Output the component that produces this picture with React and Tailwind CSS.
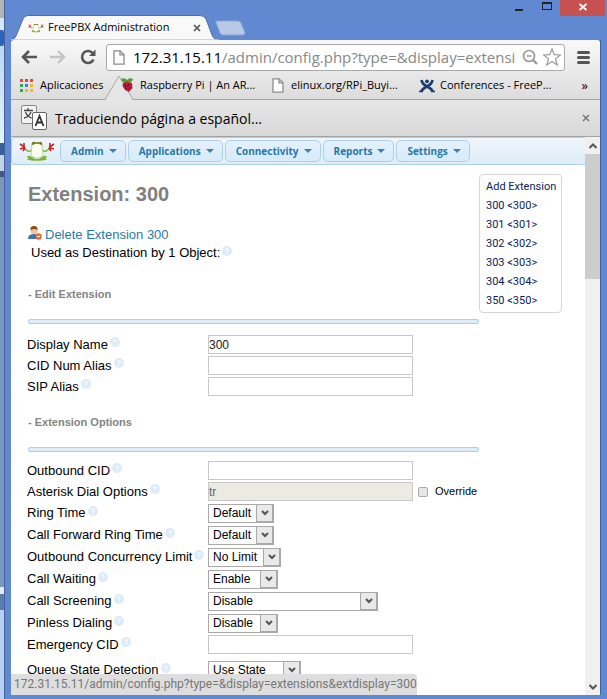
import React from "react";

const chromeFont = "font-['Open_Sans','Noto_Sans',sans-serif]";

function FrogLogo({ className }) {
  return (
    <svg viewBox="0 0 36 20" className={className} aria-hidden="true">
      <path d="M5 6Q8 12.500 14 9M31 6Q28 12.500 22 9" stroke="#86b83a" strokeWidth="1.600" fill="none" />
      <path d="M1 3l5 3.500M5 2v5M1 8l5-1.500M4 10l2-3M35 3l-5 3.500M31 2v5M35 8l-5-1.500M32 10l-2-3" stroke="#c8232c" strokeWidth="1.600" />
      <path d="M8 16Q9 13.500 13 16L16 18H20L23 16Q27 13.500 28 16L26.500 17 28 18.500Q23 20 18 19.800 13 20 8 18.500L9.500 17Z" fill="#7fb030" />
      <path d="M13 4Q14 2 16 2h4q2 0 3 2L24 12.500Q23 17 18 17T12 12.500Z" fill="#fbfdf5" stroke="#a9ce78" strokeWidth=".8" />
      <path d="M12.500 4.500Q12.500 0 16 1H20Q23.500 0 23.500 4.500L20 3H16Z" fill="#7d9a34" />
      <circle cx="14.500" cy="2.200" r="1" fill="#a33a2a" />
      <circle cx="21.500" cy="2.200" r="1" fill="#a33a2a" />
    </svg>
  );
}

function PageIcon() {
  return (
    <svg viewBox="0 0 12 15" className="h-[15px] w-3 shrink-0" aria-hidden="true">
      <path d="M1 .8h6l4 4v9.400H1z" fill="#fff" stroke="#8c8c8c" strokeWidth="1.300" />
      <path d="M7 .8v4h4" fill="none" stroke="#8c8c8c" strokeWidth="1.300" />
    </svg>
  );
}

function Help() {
  return (
    <svg viewBox="0 0 10 10" className="mb-[5px] ml-[2px] size-[10px] shrink-0" aria-hidden="true">
      <circle cx="5" cy="5" r="4.900" fill="#dcebf7" />
      <path d="M3.600 3.900Q3.700 2.800 5 2.800T6.400 4Q6.400 4.700 5.500 5 5 5.300 5 6M5 6.900v1" fill="none" stroke="#fff" strokeWidth="1" />
    </svg>
  );
}

function Row({ id, label, tall, children, className = "" }) {
  return (
    <div className={`flex items-center ${tall ? "h-[22px]" : "h-[21px]"} ${className}`}>
      <div className="flex w-[181px] shrink-0 items-center whitespace-nowrap">
        <label htmlFor={id}>{label}</label>
        <Help />
      </div>
      {children}
    </div>
  );
}

function Field({ id, ...props }) {
  return (
    <input
      id={id}
      type="text"
      className="h-[19px] w-[205px] border border-[#c8c8c8] bg-white text-[12px] text-[#222] disabled:bg-[#ebebe4] disabled:text-[#666]"
      {...props}
    />
  );
}

function Select({ id, value, width }) {
  return (
    <div className={`relative h-[19px] ${width}`}>
      <select
        id={id}
        defaultValue={value}
        className="block h-full w-full appearance-none border border-[#a9a9a9] bg-white pl-1 text-[12px] leading-[17px] text-black"
      >
        <option>{value}</option>
      </select>
      <span className="pointer-events-none absolute inset-y-0 right-0 flex w-[18px] items-center justify-center border-t border-r-2 border-b-2 border-l border-[#a9a9a9] bg-[#e9e9e9]">
        <svg viewBox="0 0 8 6" className="mt-px h-[6px] w-2" aria-hidden="true">
          <path d="M1 1l3 3 3-3" fill="none" stroke="#555" strokeWidth="2" />
        </svg>
      </span>
    </div>
  );
}

function Section({ title, children, className = "" }) {
  return (
    <section className={className}>
      <h2 className="ml-px text-[11px] leading-4 font-bold text-[#848484]">- {title}</h2>
      <div className="mt-[17px] mb-2 ml-px h-[5px] rounded-[2px] border border-[#aed0ea] bg-[#deedf7]" />
      {children}
    </section>
  );
}

function TitleBar() {
  return (
    <header className="relative flex h-10 shrink-0 items-end">
      <div className="relative flex h-[25px] w-[208px] items-center pl-[17px]">
        <svg viewBox="0 0 208 25" className="absolute inset-0 size-full" aria-hidden="true">
          <path d="M0 25Q4 24 5 21L12 4Q13 .5 17 .5H189Q193 .5 195 4L201 20Q203 25 208 25Z" fill="#f9f9f9" stroke="#4a6da8" />
          <rect y="24.500" width="208" height="1" fill="#f9f9f9" />
        </svg>
        <FrogLogo className="relative h-[10px] w-4" />
        <span className="relative ml-[4px] text-[11px] whitespace-nowrap">FreePBX Administration</span>
        <button type="button" aria-label="Close tab" className="absolute right-4 flex size-3 items-center justify-center">
          <svg viewBox="0 0 8 8" className="size-2"><path d="M1 1l6 6M7 1L1 7" stroke="#555" strokeWidth="1.700" /></svg>
        </button>
      </div>
      <button type="button" aria-label="New tab" className="mb-1 -ml-[5px] h-[16px] w-8">
        <svg viewBox="0 0 32 16" className="size-full">
          <path d="M1.500 1H24Q26 1 27 3L31 13Q31 15 29 15H9Q7 15 6 13Z" fill="#b9c9e4" stroke="#8aa5d2" />
        </svg>
      </button>
      <div className="absolute top-0 -right-1 flex h-4 items-start">
        <button type="button" aria-label="Minimize" className="flex h-4 w-7 items-end justify-center pb-[5px]">
          <span className="h-[2px] w-2 bg-[#222]" />
        </button>
        <button type="button" aria-label="Maximize" className="flex h-4 w-[27px] items-start justify-center pt-[2px]">
          <span className="h-2 w-[10px] border border-t-2 border-[#222]" />
        </button>
        <button type="button" aria-label="Close" className="flex h-4 w-[45px] items-center justify-center bg-[#c75050] pb-[3px]">
          <svg viewBox="0 0 8 8" className="size-2"><path d="M.5 1l7 6M7.500 1l-7 6" stroke="#fff" strokeWidth="1.700" /></svg>
        </button>
      </div>
    </header>
  );
}

function Toolbar() {
  return (
    <div className="relative shrink-0 rounded-t-[3px] border-b border-[#a3a3a3] bg-linear-to-b from-[#f9f9f9] to-[#dcdcdc]">
      <svg viewBox="0 0 28 25" className="absolute -bottom-px left-[94px] h-[25px] w-7" aria-hidden="true">
        <path d="M0 24.500L14 1 28 24.500" fill="#e6e6e6" stroke="#a8a8a8" />
        <path d="M1 24.500H27" stroke="#e6e6e6" />
      </svg>
      <div className="flex h-[34px] items-center px-[10px]">
        <button type="button" aria-label="Back" className="mr-[13px]">
          <svg viewBox="0 0 16 14" className="h-[14px] w-4"><path d="M8 1L2 7l6 6M2 7h14" fill="none" stroke="#555" strokeWidth="2.600" /></svg>
        </button>
        <button type="button" aria-label="Forward" className="mr-[14px]">
          <svg viewBox="0 0 16 14" className="h-[14px] w-4"><path d="M8 1l6 6-6 6M14 7H0" fill="none" stroke="#c4c4c4" strokeWidth="2.400" /></svg>
        </button>
        <button type="button" aria-label="Reload" className="mr-[10px]">
          <svg viewBox="0 0 16 16" className="size-4">
            <path d="M13 4.500A6 6 0 1 0 13.500 10.500" fill="none" stroke="#555" strokeWidth="2.600" />
            <path d="M15.500 .5V7H9z" fill="#555" />
          </svg>
        </button>
        <div className="flex h-[27px] min-w-0 flex-1 items-center rounded-[3px] border border-[#aaa] bg-white pr-[3px] pl-[6px]">
          <PageIcon />
          <div className="ml-2 min-w-0 flex-1 overflow-hidden text-[15px] leading-6 whitespace-nowrap text-[#888]">
            <span className="text-black">172.31.15.11</span>/admin/config.php?type=&amp;display=extensi
          </div>
          <svg viewBox="0 0 16 16" className="ml-1 size-4 shrink-0" aria-hidden="true">
            <circle cx="7" cy="7" r="5.500" fill="none" stroke="#999" strokeWidth="1.700" />
            <path d="M4.500 7h5" stroke="#999" strokeWidth="1.500" /><path d="M11 11l4 4" stroke="#999" strokeWidth="2.400" />
          </svg>
          <svg viewBox="0 0 18 18" className="ml-[5px] size-[18px] shrink-0" aria-hidden="true">
            <path d="M9 1l2.200 5.700 6.100.3-4.800 3.900 1.700 6L9 13.500 3.800 16.900l1.700-6L.7 7l6.100-.3z" fill="#fff" stroke="#999" strokeWidth="1.200" />
          </svg>
        </div>
        <button type="button" aria-label="Menu" className="ml-3 flex w-[13px] flex-col gap-[2px]">
          <span className="h-[3px] rounded-sm bg-[#555]" />
          <span className="h-[3px] rounded-sm bg-[#555]" />
          <span className="h-[3px] rounded-sm bg-[#555]" />
        </button>
      </div>
      <nav className="relative flex h-[25px] items-center pr-3 pb-[2px] pl-[9px] text-[11px] whitespace-nowrap">
        <a href="#apps" className="flex w-[101px] items-center gap-[7px]">
          <svg viewBox="0 0 13 13" className="size-[13px] shrink-0" aria-hidden="true">
            <path d="M0 0h3v3H0zM5 0h3v3H5zM10 0h3v3h-3z" fill="#e8453c" />
            <path d="M0 5h3v3H0z" fill="#2da94f" /><path d="M5 5h3v3H5z" fill="#3f7de0" /><path d="M10 5h3v3h-3z" fill="#f7b529" />
            <path d="M0 10h3v3H0z" fill="#2da94f" /><path d="M5 10h3v3H5zM10 10h3v3h-3z" fill="#f7b529" />
          </svg>
          Aplicaciones
        </a>
        <a href="#raspberry" className="flex w-[151px] items-center gap-[7px]">
          <svg viewBox="0 0 12 15" className="h-[15px] w-3 shrink-0" aria-hidden="true">
            <path d="M0 1Q4-1 6 2 8-1 12 1 11 5 6 5 1 5 0 1z" fill="#4fa02c" />
            <path d="M2 5Q6 3 11 5L11.500 10 8 14 4 12 1.500 8z" fill="#c4163c" />
            <path d="M3 6l2 2M8 6L6 9M4 9l2 2M9 9l-1 2" stroke="#4a0a1c" />
          </svg>
          Raspberry Pi | An AR...
        </a>
        <a href="#elinux" className="flex w-[147px] items-center gap-[7px]"><PageIcon />elinux.org/RPi_Buyi...</a>
        <a href="#conferences" className="flex items-center gap-[5px]">
          <svg viewBox="0 0 16 14" className="h-[14px] w-4 shrink-0" aria-hidden="true">
            <path d="M2.500 1Q3 5 8 7.500T13.500 12.500M13.500 1Q13 5 8 7.500T2.500 12.500" fill="none" stroke="#1b3c6e" strokeWidth="2.600" />
            <path d="M0 12.500h4M12 12.500h4" stroke="#1b3c6e" strokeWidth="1.600" />
            <circle cx="8" cy="2.300" r="1.900" fill="#1b3c6e" />
          </svg>
          Conferences - FreeP...
        </a>
        <button type="button" aria-label="More bookmarks" className="ml-auto text-[13px]">»</button>
      </nav>
    </div>
  );
}

function TranslateBar() {
  return (
    <div className="flex h-[37px] shrink-0 items-center border-b border-[#a3a3a3] bg-linear-to-b from-[#e6e6e6] to-[#d8d8d8] px-[10px]">
      <svg viewBox="0 0 26 26" className="size-[26px]" aria-hidden="true">
        <rect x=".5" y=".5" width="15" height="18" rx="1.500" fill="#f4f4f4" stroke="#888" />
        <path d="M7 3v2.500M3 5.500h9M4.500 7q2 5 6 6M10 7q-2 5-7 6" fill="none" stroke="#444" strokeWidth="1.300" />
        <rect x="11.500" y="7.500" width="14" height="17" rx="1.500" fill="#fff" stroke="#666" />
        <path d="M14.500 21l4-10 4 10M16 17.500h5" fill="none" stroke="#333" strokeWidth="1.800" />
      </svg>
      <span className="ml-[8px] text-[14px]">Traduciendo página a español...</span>
      <button type="button" aria-label="Close translation bar" className="ml-auto">
        <svg viewBox="0 0 8 8" className="size-2"><path d="M1 1l6 6M7 1L1 7" stroke="#777" strokeWidth="1.500" /></svg>
      </button>
    </div>
  );
}

const menus = ["Admin", "Applications", "Connectivity", "Reports", "Settings"];
const extensions = ["Add Extension", "300 <300>", "301 <301>", "302 <302>", "303 <303>", "304 <304>", "350 <350>"];

function MenuBar() {
  return (
    <nav className="flex h-7 items-center gap-[2px] rounded-l-[4px] border border-r-0 border-[#aed0ea] bg-linear-to-b from-[#eff6fb] to-[#deedf7] pl-[7px]">
      <FrogLogo className="mr-[3px] h-[20px] w-9" />
      {menus.map((m) => (
        <button
          key={m}
          type="button"
          className="flex h-[22px] items-center gap-[5px] rounded-[5px] border border-[#aed0ea] bg-linear-to-b from-[#e4f1fb] to-[#d7ebf9] pr-2 pl-[10px] text-[10px] font-bold text-[#2779aa]"
        >
          {m}
          <span className="border-x-[4px] border-t-[4px] border-x-transparent border-t-[#3d80b3]" />
        </button>
      ))}
    </nav>
  );
}

function ScrollBar() {
  return (
    <div className="flex w-[15px] shrink-0 flex-col items-center bg-[#f0f0f0]">
      <svg viewBox="0 0 8 17" className="h-[17px] w-2" aria-hidden="true"><path d="M.5 11L4 7.500 7.500 11" fill="none" stroke="#555" strokeWidth="2" /></svg>
      <div className="h-[125px] w-full bg-[#cdcdcd]" />
      <svg viewBox="0 0 8 17" className="mt-auto h-[17px] w-2" aria-hidden="true"><path d="M.5 7L4 10.500 7.500 7" fill="none" stroke="#555" strokeWidth="2" /></svg>
    </div>
  );
}

export default function App() {
  return (
    <div className={`flex h-screen overflow-hidden bg-[#6189d1] text-black ${chromeFont}`}>
      <div className="flex w-1 shrink-0 flex-col bg-[#7b98c0]">
        <div className="h-[18px] bg-[#b5b5b5]" />
        <div className="h-3 bg-[#d5e6f8]" />
        <div className="h-4 rounded-r-full bg-[#2b62bd]" />
        <div className="h-[97px] bg-linear-to-b from-[#bcd6f3] to-[#e6f4fc]" />
        <div className="h-3 bg-[#3c5f9c]" />
        <div className="h-4 bg-[#c3d3e8]" />
        <div className="h-[6px] bg-[#44597f]" />
        <div className="flex-1" />
        <div className="h-[7px] bg-[#e4ebf4]" />
        <div className="h-4 bg-[#5b7cb2]" />
        <div className="h-[89px] bg-[#b7d0f1]" />
      </div>
      <div className="flex min-w-0 flex-1 flex-col border-l border-[#43629c] pr-[6px] pb-[4px] pl-[6px]">
        <TitleBar />
        <div className="relative flex min-h-0 flex-1 flex-col border-r border-[#43629c]">
          <Toolbar />
          <TranslateBar />
          <div className="flex min-h-0 flex-1 bg-white">
            <div className="min-w-0 flex-1 overflow-hidden">
              <MenuBar />
              <div className="flex items-start pr-[23px] pl-4 font-['Liberation_Sans',Arial,sans-serif] text-[13px]">
                <main className="min-w-0 flex-1">
                  <h1 className="mt-[17px] ml-px text-[20px] leading-6 font-bold text-[#808080]">Extension: 300</h1>
                  <a href="#delete" className="mt-5 ml-px flex h-[18px] items-center gap-[3px] text-[#2779aa]">
                    <svg viewBox="0 0 14 14" className="mb-1 size-[14px]" aria-hidden="true">
                      <path d="M0 13Q0 8 6 8t6 5z" fill="#3d72b8" />
                      <circle cx="6" cy="4.500" r="3.500" fill="#f1c196" />
                      <path d="M2.500 4Q2 0 6 0t3.500 4Q7 2 2.500 4z" fill="#8a4a1e" />
                      <circle cx="10.500" cy="10.500" r="3.200" fill="#ea6326" />
                      <path d="M8.800 10.500h3.400" stroke="#fff" strokeWidth="1.300" />
                    </svg>
                    Delete Extension 300
                  </a>
                  <p className="ml-1 flex h-[18px] items-center">Used as Destination by 1 Object:<Help /></p>
                  <Section title="Edit Extension" className="mt-6">
                    <div className="pt-[2px]">
                      <Row id="name" label="Display Name"><Field id="name" defaultValue="300" /></Row>
                      <Row id="cidalias" label="CID Num Alias"><Field id="cidalias" /></Row>
                      <Row id="sipalias" label="SIP Alias"><Field id="sipalias" /></Row>
                    </div>
                  </Section>
                  <Section title="Extension Options" className="mt-[17px]">
                    <Row id="outcid" label="Outbound CID"><Field id="outcid" /></Row>
                    <Row id="dialopts" label="Asterisk Dial Options">
                      <Field id="dialopts" defaultValue="tr" disabled />
                      <input id="override" type="checkbox" className="ml-[5px] size-[10px] shrink-0 appearance-none rounded-[2px] border border-[#aaa] bg-[#e6e6e6]" />
                      <label htmlFor="override" className="ml-[7px] text-[11px]">Override</label>
                    </Row>
                    <Row tall id="ring" label="Ring Time"><Select id="ring" value="Default" width="w-[66px]" /></Row>
                    <Row tall id="cfring" label="Call Forward Ring Time"><Select id="cfring" value="Default" width="w-[66px]" /></Row>
                    <Row tall id="limit" label="Outbound Concurrency Limit"><Select id="limit" value="No Limit" width="w-[73px]" /></Row>
                    <Row tall id="waiting" label="Call Waiting"><Select id="waiting" value="Enable" width="w-[70px]" /></Row>
                    <Row tall id="screening" label="Call Screening"><Select id="screening" value="Disable" width="w-[170px]" /></Row>
                    <Row tall id="pinless" label="Pinless Dialing"><Select id="pinless" value="Disable" width="w-[70px]" /></Row>
                    <Row id="ecid" label="Emergency CID"><Field id="ecid" /></Row>
                    <Row tall id="queue" label="Queue State Detection" className="mt-1"><Select id="queue" value="Use State" width="w-[93px]" /></Row>
                  </Section>
                </main>
                <aside className="mt-[9px] w-[83px] shrink-0 rounded-[4px] border border-[#d5d5d5] py-[2px] pl-[6px] font-['Roboto',sans-serif] text-[11px] leading-[19px] whitespace-nowrap text-[#0a1e5c]">
                  {extensions.map((e) => (
                    <a key={e} href="#extension" className="block">{e}</a>
                  ))}
                </aside>
              </div>
            </div>
            <ScrollBar />
          </div>
          <div className="absolute bottom-0 left-0 rounded-tr-[4px] bg-[#dedede] pl-[3px] font-['Roboto',sans-serif] text-[12px] leading-[21px] whitespace-nowrap text-[#777]">
            172.31.15.11/admin/config.php?type=&amp;display=extensions&amp;extdisplay=300
          </div>
        </div>
      </div>
    </div>
  );
}
